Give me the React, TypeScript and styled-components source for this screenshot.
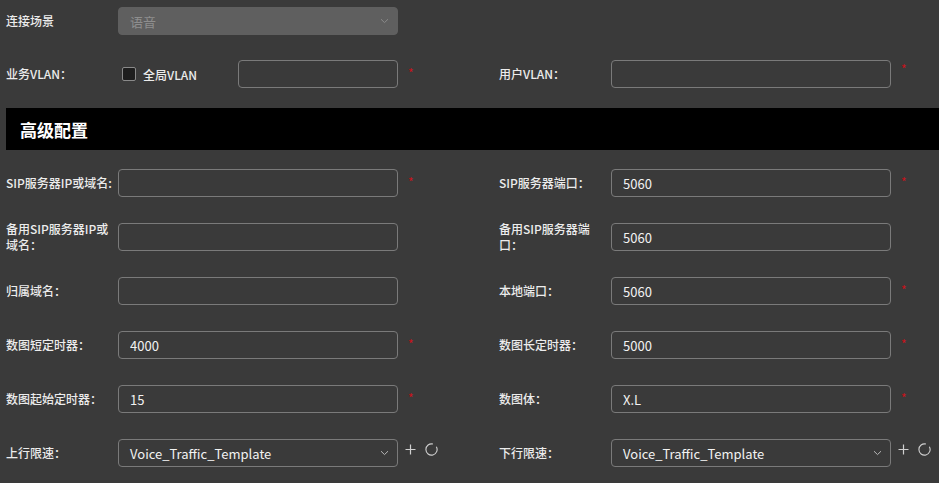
import React from 'react';
import styled, {createGlobalStyle} from "styled-components";

const GlobalStyle = createGlobalStyle`
    body {
        margin: 0;
        background: #3a3a3a;
        font-family: "Noto Sans CJK SC", "Noto Sans", sans-serif;
    }
`

type FieldData = {
    label: string
    value?: string
    required?: boolean
    select?: boolean
}

const rows: [FieldData, FieldData][] = [
    [{label: "SIP服务器IP或域名:", required: true}, {label: "SIP服务器端口：", value: "5060", required: true}],
    [{label: "备用SIP服务器IP或域名："}, {label: "备用SIP服务器端口：", value: "5060"}],
    [{label: "归属域名："}, {label: "本地端口：", value: "5060", required: true}],
    [{label: "数图短定时器：", value: "4000", required: true}, {label: "数图长定时器：", value: "5000", required: true}],
    [{label: "数图起始定时器：", value: "15", required: true}, {label: "数图体：", value: "X.L", required: true}],
    [{label: "上行限速：", value: "Voice_Traffic_Template", select: true}, {label: "下行限速：", value: "Voice_Traffic_Template", select: true}],
]

const Chevron = ({color}: {color: string}) => (
    <svg width="9" height="6" viewBox="0 0 9 6">
        <path d="M1 1.2 L4.5 4.6 L8 1.2" fill="none" stroke={color} strokeWidth="1"/>
    </svg>
)

const Field = ({f}: {f: FieldData}) => (
    <FieldRow>
        <Label>{f.label}</Label>
        {f.select ? (
            <SelectBox>
                <span>{f.value}</span>
                <Chevron color="#b8b8b8"/>
            </SelectBox>
        ) : (
            <Input defaultValue={f.value}/>
        )}
        {f.required && <Star>*</Star>}
        {f.select && (
            <Tools>
                <svg width="11" height="11" viewBox="0 0 11 11">
                    <path d="M5.5 0.5 V10.5 M0.5 5.5 H10.5" stroke="#d0d0d0" strokeWidth="1.2"/>
                </svg>
                <svg width="13" height="13" viewBox="0 0 13 13">
                    <path d="M11.35 3.7 A5.6 5.6 0 1 1 7.95 1.09" fill="none" stroke="#d0d0d0" strokeWidth="1.1"/>
                </svg>
            </Tools>
        )}
    </FieldRow>
)

export default function App() {
    return (
        <Page>
            <GlobalStyle/>
            <Grid>
                <FieldRow>
                    <Label>连接场景</Label>
                    <SelectBox disabled>
                        <span>语音</span>
                        <Chevron color="#8a8a8a"/>
                    </SelectBox>
                </FieldRow>
                <div/>
            </Grid>
            <Grid $top={25}>
                <FieldRow>
                    <Label>业务VLAN：</Label>
                    <CheckWrap>
                        <CheckBox/>
                        <CheckText>全局VLAN</CheckText>
                    </CheckWrap>
                    <Input $width={160}/>
                    <Star>*</Star>
                </FieldRow>
                <FieldRow>
                    <Label>用户VLAN：</Label>
                    <Input/>
                    <Star $up>*</Star>
                </FieldRow>
            </Grid>
            <SectionHeader>高级配置</SectionHeader>
            <Rows>
                {rows.map((r, i) => (
                    <Grid key={i}>
                        <Field f={r[0]}/>
                        <Field f={r[1]}/>
                    </Grid>
                ))}
            </Rows>
        </Page>
    );
}

const Page = styled.div`
    padding: 7px 0 0 6px;
    min-height: 476px;
    color: #ececec;
`

const Grid = styled.div<{$top?: number}>`
    display: grid;
    grid-template-columns: 493px 1fr;
    margin-top: ${p => p.$top || 0}px;
`

const Rows = styled.div`
    display: flex;
    flex-direction: column;
    gap: 26px;
    margin-top: 19px;
`

const FieldRow = styled.div`
    display: flex;
    align-items: center;
    height: 28px;
`

const Label = styled.div`
    width: 112px;
    flex-shrink: 0;
    padding-right: 6px;
    box-sizing: border-box;
    font-size: 12px;
    font-weight: 500;
    line-height: 16px;
    color: #ececec;
`

const Input = styled.input<{$width?: number}>`
    width: ${p => p.$width || 280}px;
    height: 28px;
    box-sizing: border-box;
    border: 1px solid #7a7a7a;
    border-radius: 4px;
    background: transparent;
    padding: 0 11px;
    font-family: inherit;
    font-size: 13px;
    color: #f2f2f2;
    outline: none;
`

const SelectBox = styled.div<{disabled?: boolean}>`
    width: 280px;
    height: 28px;
    box-sizing: border-box;
    display: flex;
    align-items: center;
    justify-content: space-between;
    padding: 0 8px 0 11px;
    border-radius: 4px;
    border: 1px solid ${p => p.disabled ? "#5f5f5f" : "#7a7a7a"};
    background: ${p => p.disabled ? "#5f5f5f" : "transparent"};
    font-size: 13px;
    color: ${p => p.disabled ? "#8e8e8e" : "#f2f2f2"};
`

const Star = styled.span<{$up?: boolean}>`
    align-self: flex-start;
    margin: ${p => p.$up ? 3 : 7}px 0 0 10px;
    font-size: 12px;
    line-height: 12px;
    color: #c8121b;
`

const Tools = styled.div`
    align-self: flex-start;
    display: flex;
    align-items: center;
    gap: 9px;
    margin: 4px 0 0 7px;
`

const CheckWrap = styled.label`
    display: flex;
    align-items: center;
    width: 116px;
    margin-left: 4px;
`

const CheckBox = styled.span`
    width: 14px;
    height: 14px;
    box-sizing: border-box;
    border: 1px solid #8a8a8a;
    border-radius: 2px;
    background: #1e1e1e;
`

const CheckText = styled.span`
    margin-left: 7px;
    font-size: 12px;
    font-weight: 500;
`

const SectionHeader = styled.div`
    margin-top: 20px;
    height: 42px;
    background: #000;
    display: flex;
    align-items: center;
    padding-left: 14px;
    font-size: 17px;
    font-weight: 700;
    color: #fff;
`
